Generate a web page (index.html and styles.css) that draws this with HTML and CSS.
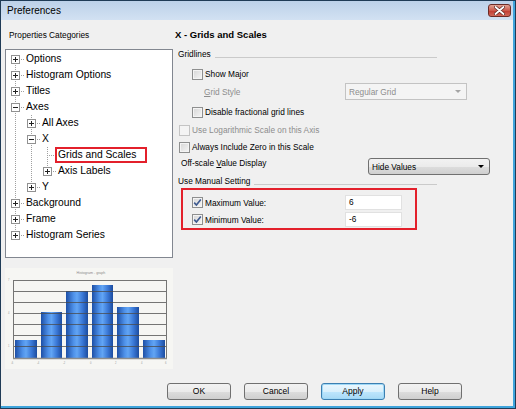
FILE: index.html
```html
<!DOCTYPE html>
<html>
<head>
	<meta charset="utf-8"/>
	<title>Preferences</title>
	<link rel="stylesheet" href="styles.css">
</head>
<body>
	<div class="window">
		<div class="titlebar">
			<span class="caption">Preferences</span>
			<span class="close">
				<svg width="11" height="9" viewBox="0 0 11 9">
					<path d="M1.5 1 L9.5 8 M9.5 1 L1.5 8" stroke="#5a2420" stroke-width="3.2" stroke-linecap="round"/>
					<path d="M1.5 1 L9.5 8 M9.5 1 L1.5 8" stroke="#ffffff" stroke-width="1.8" stroke-linecap="round"/>
				</svg>
			</span>
		</div>
		<div class="dialog">
			<div class="content">
				<div class="left">
					<div class="heading">Properties Categories</div>
					<div class="tree">
						<ul class="nodes root">
							<li><div class="node"><span class="exp plus"></span><span class="dash"></span><span class="label">Options</span></div></li>
							<li><div class="node"><span class="exp plus"></span><span class="dash"></span><span class="label">Histogram Options</span></div></li>
							<li><div class="node"><span class="exp plus"></span><span class="dash"></span><span class="label">Titles</span></div></li>
							<li>
								<div class="node"><span class="exp minus"></span><span class="dash"></span><span class="label">Axes</span></div>
								<ul class="nodes">
									<li><div class="node"><span class="exp plus"></span><span class="dash"></span><span class="label">All Axes</span></div></li>
									<li>
										<div class="node"><span class="exp minus"></span><span class="dash"></span><span class="label">X</span></div>
										<ul class="nodes">
											<li><div class="node"><span class="exp leaf"></span><span class="dash"></span><span class="label selected">Grids and Scales</span></div></li>
											<li><div class="node"><span class="exp plus"></span><span class="dash"></span><span class="label">Axis Labels</span></div></li>
										</ul>
									</li>
									<li><div class="node"><span class="exp plus"></span><span class="dash"></span><span class="label">Y</span></div></li>
								</ul>
							</li>
							<li><div class="node"><span class="exp plus"></span><span class="dash"></span><span class="label">Background</span></div></li>
							<li><div class="node"><span class="exp plus"></span><span class="dash"></span><span class="label">Frame</span></div></li>
							<li><div class="node"><span class="exp plus"></span><span class="dash"></span><span class="label">Histogram Series</span></div></li>
						</ul>
					</div>
					<div class="preview">
						<svg width="168" height="101" viewBox="0 0 168 101">
							<defs>
								<linearGradient id="bar" x1="0" y1="0" x2="1" y2="0">
									<stop offset="0" stop-color="#1d4fa6"/>
									<stop offset="0.35" stop-color="#4f92ea"/>
									<stop offset="0.5" stop-color="#62a5f4"/>
									<stop offset="0.75" stop-color="#3a78d6"/>
									<stop offset="1" stop-color="#1c4c9f"/>
								</linearGradient>
							</defs>
							<rect x="0" y="0" width="168" height="101" fill="#f6f6f3"/>
							<text x="86" y="6" font-size="3.6" fill="#8a8a8a" text-anchor="middle" font-family="Liberation Sans, sans-serif">Histogram - graph</text>
							<!-- bars -->
							<rect x="10" y="72" width="22" height="18" fill="url(#bar)"/>
							<rect x="36" y="44" width="21" height="46" fill="url(#bar)"/>
							<rect x="61" y="23" width="22" height="67" fill="url(#bar)"/>
							<rect x="87" y="17" width="21" height="73" fill="url(#bar)"/>
							<rect x="112" y="39" width="22" height="51" fill="url(#bar)"/>
							<rect x="138" y="72" width="22" height="18" fill="url(#bar)"/>
							<!-- grid -->
							<g stroke="#4a4a4a" stroke-width="1" opacity="0.75">
								<path d="M8 12.5 H162 M8 23.5 H162 M8 34.5 H162 M8 45.5 H162 M8 56.5 H162 M8 67.5 H162 M8 78.5 H162"/>
								<path d="M8.5 12 V90 M161.5 12 V90"/>
							</g>
							<path d="M8 90.5 H162" stroke="#8c8c8c" stroke-width="1.5"/>
							<g font-size="2.6" fill="#9a9a9a" font-family="Liberation Sans, sans-serif">
								<text x="3" y="13">7</text>
								<text x="3" y="46">4</text>
								<text x="3" y="79">1</text>
								<text x="6" y="96">-6</text>
								<text x="32" y="96">-4</text>
								<text x="58" y="96">-2</text>
								<text x="85" y="96">0</text>
								<text x="110" y="96">2</text>
								<text x="136" y="96">4</text>
								<text x="160" y="96">6</text>
							</g>
						</svg>
					</div>
				</div>
				<div class="right">
					<div class="page-title">X - Grids and Scales</div>
					<div class="row group-head gridlines"><span>Gridlines</span><span class="rule"></span></div>
					<div class="row indent2">
						<span class="check"></span><span>Show Major</span>
					</div>
					<div class="row indent3 tall">
						<span class="field-label disabled"><u>G</u>rid Style</span>
						<span class="combo disabled">Regular Grid<span class="arrow"></span></span>
					</div>
					<div class="row indent2 gap4">
						<span class="check"></span><span>Disable fractional grid lines</span>
					</div>
					<div class="row indent1 gap2">
						<span class="check off"></span><span class="disabled">Use Logarithmic Scale on this Axis</span>
					</div>
					<div class="row indent1 gap1">
						<span class="check"></span><span>Always Include Zero in this Scale</span>
					</div>
					<div class="row offscale tall">
						<span class="field-label wide">Off-scale <u>V</u>alue Display</span>
						<span class="combo">Hide Values<span class="arrow"></span></span>
					</div>
					<div class="row group-head manual"><span>Use Manual Setting</span><span class="rule"></span></div>
					<div class="manual-box">
						<div class="value-row first">
							<span class="value-label">
								<span class="check">
									<svg width="9" height="9" viewBox="0 0 9 9"><path d="M1.2 4.6 L3.4 7 L7.8 1.4" fill="none" stroke="#3e5a8f" stroke-width="1.6"/></svg>
								</span>Maximum Value:
							</span>
							<span class="textbox">6</span>
						</div>
						<div class="value-row">
							<span class="value-label">
								<span class="check">
									<svg width="9" height="9" viewBox="0 0 9 9"><path d="M1.2 4.6 L3.4 7 L7.8 1.4" fill="none" stroke="#3e5a8f" stroke-width="1.6"/></svg>
								</span>Minimum Value:
							</span>
							<span class="textbox">-6</span>
						</div>
					</div>
				</div>
			</div>
			<div class="buttons">
				<div class="button">OK</div>
				<div class="button">Cancel</div>
				<div class="button default">Apply</div>
				<div class="button">Help</div>
			</div>
		</div>
	</div>
</body>
</html>
```

FILE: styles.css
```css
html,body,ul{
	margin:0;
	padding:0;
}
li{
	list-style:none;
}
body{
	width:516px;
	height:409px;
	font-family:"Liberation Sans",Arial,sans-serif;
	color:#000;
	background:#fff;
}
.window{
	box-sizing:border-box;
	width:516px;
	height:409px;
	border:1px solid #1f3b56;
	padding:0 2px 2px 0;
	background:#3fa4dc;
	display:flex;
	flex-direction:column;
}
.titlebar{
	height:19px;
	display:flex;
	align-items:flex-start;
	background:linear-gradient(#bcd1e9,#d2e1f2);
}
.caption{
	flex:1;
	padding-left:6px;
	font-size:10px;
	line-height:19px;
}
.close{
	width:23px;
	height:13px;
	margin:3px 2px 0 0;
	box-sizing:border-box;
	border:1px solid #6b2b26;
	border-radius:3px;
	background:linear-gradient(#e3a394,#cc5a4c 50%,#c0392f 51%,#d0695a);
	display:flex;
	align-items:center;
	justify-content:center;
}
.dialog{
	flex:1;
	background:#f0f0f0;
	display:flex;
	flex-direction:column;
}
.content{
	height:355px;
	display:flex;
}
/* left side: category tree and preview */
.left{
	box-sizing:border-box;
	width:174px;
	padding:0 2px 0 4px;
}
.heading{
	margin-top:7px;
	height:16px;
	line-height:16px;
	padding-left:4px;
	font-size:8.3px;
}
.tree{
	box-sizing:border-box;
	margin-top:6px;
	height:209px;
	border:1px solid #828790;
	background:#fff;
	padding-top:1px;
	font-size:10.3px;
}
.nodes{
	background-image:repeating-linear-gradient(to bottom,#a0a0a0 0,#a0a0a0 1px,transparent 1px,transparent 2px);
	background-repeat:no-repeat;
	background-size:1px calc(100% - 8px);
	background-position:9px 0;
}
.nodes .nodes{
	margin-left:16px;
}
.root{
	background-size:1px calc(100% - 16px);
	background-position:9px 8px;
}
.node{
	display:flex;
	align-items:center;
	height:16px;
	padding-left:5px;
}
.exp{
	box-sizing:border-box;
	width:9px;
	height:9px;
	border:1px solid #919191;
	background:#fff;
	flex:none;
}
.plus{
	background:
		linear-gradient(#222,#222) center/5px 1px no-repeat,
		linear-gradient(#222,#222) center/1px 5px no-repeat,
		#fff;
}
.minus{
	background:
		linear-gradient(#222,#222) center/5px 1px no-repeat,
		#fff;
}
.leaf{
	border:none;
	background:repeating-linear-gradient(to right,#a0a0a0 0,#a0a0a0 1px,transparent 1px,transparent 2px) 4px 4px/5px 1px no-repeat;
}
.dash{
	width:4px;
	height:1px;
	margin-left:1px;
	background:repeating-linear-gradient(to right,#a0a0a0 0,#a0a0a0 1px,transparent 1px,transparent 2px);
	flex:none;
}
.label{
	padding:0 1px;
	line-height:16px;
	white-space:nowrap;
}
.selected{
	margin-left:-2px;
	padding-right:9px;
	line-height:12px;
	border:2px solid #e3202b;
}
.preview{
	margin-top:10px;
	height:101px;
}
.preview svg{
	display:block;
}
/* right side: settings page */
.right{
	flex:1;
	font-size:8.3px;
}
.page-title{
	margin-top:7px;
	height:16px;
	line-height:16px;
	font-size:9.5px;
	font-weight:bold;
}
.row{
	display:flex;
	align-items:center;
	height:16px;
	white-space:nowrap;
}
.tall{
	height:17px;
}
.group-head{
	padding-left:3px;
}
.gridlines{
	margin-top:3px;
}
.manual{
	height:12px;
}
.rule{
	flex:1;
	height:0;
	margin:6px 76px 0 4px;
	border-top:1px solid #cacaca;
}
.indent1{
	padding-left:4px;
}
.indent2{
	margin-top:4px;
	padding-left:17px;
}
.indent3{
	margin-top:1px;
	padding-left:29px;
}
.gap1{
	margin-top:1px;
}
.gap2{
	margin-top:2px;
}
.gap4{
	margin-top:4px;
}
.check{
	box-sizing:border-box;
	width:11px;
	height:11px;
	margin-right:2px;
	border:1px solid #8e8f8f;
	background:linear-gradient(135deg,#d6d6d6,#f6f6f6);
	box-shadow:inset 0 0 0 1px #f4f4f4;
	display:inline-flex;
	align-items:center;
	justify-content:center;
	flex:none;
}
.check.off{
	border-color:#c4c4c4;
	background:#f4f4f4;
}
.disabled{
	color:#8d8d8d;
}
.field-label{
	width:141px;
	flex:none;
}
.field-label.wide{
	width:187px;
	align-self:flex-start;
	line-height:10px;
}
.offscale{
	margin-top:3px;
	padding-left:6px;
}
.combo{
	box-sizing:border-box;
	width:122px;
	height:17px;
	padding-left:3px;
	border:1px solid #707070;
	border-radius:3px;
	background:linear-gradient(#f2f2f2,#ebebeb 50%,#dddddd 51%,#cfcfcf);
	display:flex;
	align-items:center;
	justify-content:space-between;
	padding-right:5px;
}
.combo.disabled{
	border-color:#c3c3c3;
	border-radius:0;
	background:#f4f4f4;
}
.arrow{
	width:0;
	height:0;
	border-left:3px solid transparent;
	border-right:3px solid transparent;
	border-top:3px solid #000;
}
.combo.disabled .arrow{
	border-top-color:#a5a5a5;
}
.manual-box{
	box-sizing:border-box;
	width:236px;
	height:42px;
	margin:1px 0 0 6px;
	border:2px solid #e3202b;
	padding:5px 0 0 9px;
}
.value-row{
	display:flex;
	align-items:center;
	height:15px;
	margin-top:2px;
}
.value-row.first{
	margin-top:0;
}
.value-label{
	width:153px;
	display:flex;
	align-items:center;
}
.textbox{
	box-sizing:border-box;
	width:57px;
	height:15px;
	padding-left:3px;
	line-height:13px;
	border:1px solid #e1e1e1;
	background:#fff;
}
/* bottom buttons */
.buttons{
	display:flex;
	gap:13px;
	margin-top:8px;
	padding-left:166px;
}
.button{
	box-sizing:border-box;
	width:64px;
	height:17px;
	line-height:15px;
	text-align:center;
	font-size:8.5px;
	border:1px solid #707070;
	border-radius:3px;
	background:linear-gradient(#f2f2f2,#ebebeb 50%,#dddddd 51%,#cfcfcf);
}
.button.default{
	border-color:#3c7fb1;
	background:linear-gradient(#eaf6fd,#d9f0fc 50%,#bee6fd 51%,#a7d9f5);
	box-shadow:inset 0 0 0 1px #9fd8f6;
}
```
